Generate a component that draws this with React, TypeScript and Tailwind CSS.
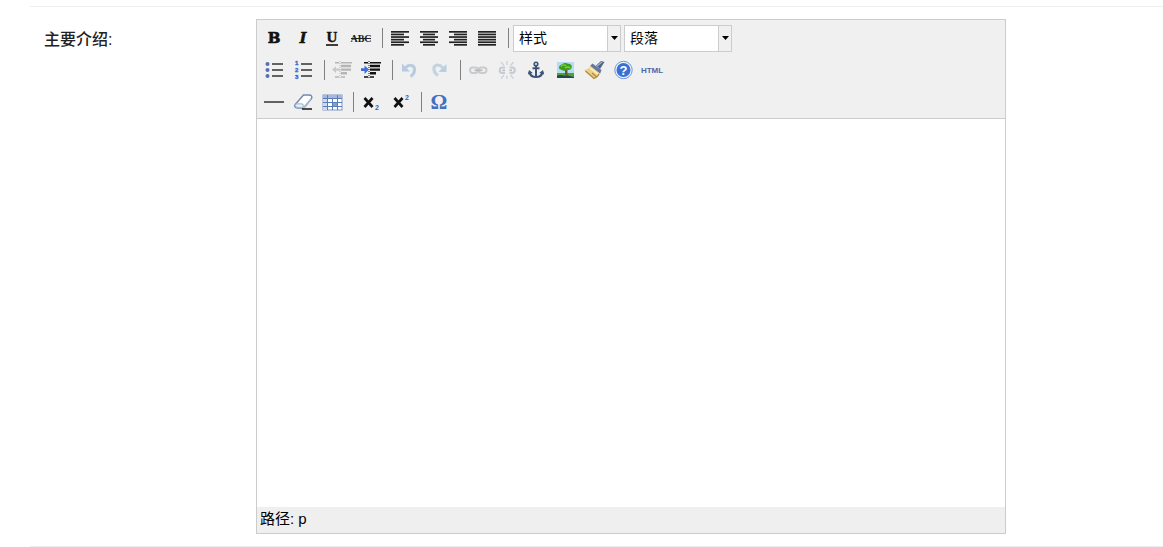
import React from 'react';

type ToolProps = {
  label: string;
  disabled?: boolean;
  children: React.ReactNode;
};

function Tool({ label, disabled, children }: ToolProps) {
  return (
    <button
      type="button"
      title={label}
      aria-label={label}
      disabled={disabled}
      className="mr-px flex h-7 w-7 shrink-0 items-center justify-center"
    >
      {children}
    </button>
  );
}

function Icon({ children }: { children: React.ReactNode }) {
  return (
    <svg width="20" height="20" viewBox="0 0 20 20" fill="none" className="block shrink-0 overflow-visible">
      {children}
    </svg>
  );
}

function Separator() {
  return <span className="ml-1.5 mr-[3px] h-5 w-px shrink-0 bg-[#808080]" />;
}

// each line is [start, end], stacked from the top
function Lines({ rows }: { rows: number[][] }) {
  return (
    <Icon>
      {rows.map(([from, to], i) => (
        <rect key={i} x={from} y={3 + i * 2.6} width={to - from} height="1.7" fill="#222" />
      ))}
    </Icon>
  );
}

function Dropdown({ label, value }: { label: string; value: string }) {
  return (
    <div className="relative mr-[3px] h-[27px] w-[108px] border border-[#ccc] bg-white">
      <select
        aria-label={label}
        defaultValue={value}
        className="block h-full w-full appearance-none bg-transparent pl-[5px] pr-4 text-sm text-black outline-none"
      >
        <option>{value}</option>
      </select>
      <span className="pointer-events-none absolute inset-y-0 right-0 flex w-[13px] items-center justify-center border-l border-[#ccc] bg-[#f0f0f0]">
        <svg width="7" height="4" viewBox="0 0 7 4">
          <path d="M0 0h7L3.5 4z" fill="#000" />
        </svg>
      </span>
    </div>
  );
}

function Indent({ color, arrow, outdent }: { color: string; arrow: string; outdent?: boolean }) {
  return (
    <Icon>
      <path d="M3 2.7h4M9 2.7h11M3 17h4M9 17h4" stroke={color} strokeWidth="1.4" />
      <path d="M9 6h10M9 9.6h10M9 13.2h6" stroke={color} strokeWidth="2.4" />
      <path d="M8 1v18" stroke={color} strokeDasharray="1 1" />
      {outdent ? (
        <path d="M0 9.6l4-3.4v2.2h4v2.4H4V13z" fill={arrow} />
      ) : (
        <path d="M8 9.6L3.5 5.5v2.7H0V11h3.500v2.900z" fill={arrow} />
      )}
    </Icon>
  );
}

function FormatRow() {
  return (
    <div className="flex h-8 items-center">
      <Tool label="粗体">
        <Icon>
          <text x="10" y="15" textAnchor="middle" fontFamily="DejaVu Serif" fontWeight="bold" fontSize="15" fill="#111" stroke="#111" strokeWidth="0.7">B</text>
        </Icon>
      </Tool>
      <Tool label="斜体">
        <Icon>
          <text x="10" y="15" textAnchor="middle" fontFamily="DejaVu Serif" fontWeight="bold" fontStyle="italic" fontSize="15" fill="#111" stroke="#111" strokeWidth="0.4">I</text>
        </Icon>
      </Tool>
      <Tool label="下划线">
        <Icon>
          <text x="10" y="14" textAnchor="middle" fontFamily="Liberation Serif" fontWeight="bold" fontSize="15" fill="#111" stroke="#111" strokeWidth="0.4">U</text>
          <path d="M4 17h12" stroke="#111" strokeWidth="1.6" />
        </Icon>
      </Tool>
      <Tool label="删除线">
        <Icon>
          <text x="10" y="14" textAnchor="middle" fontFamily="Liberation Serif" fontWeight="bold" fontSize="10" fill="#222">ABC</text>
          <path d="M0 10.5h20" stroke="#222" />
        </Icon>
      </Tool>
      <Separator />
      <Tool label="左对齐">
        <Lines rows={[[1, 19], [1, 14], [1, 19], [1, 14], [1, 19], [1, 14]]} />
      </Tool>
      <Tool label="居中对齐">
        <Lines rows={[[1, 19], [4, 16], [1, 19], [4, 16], [1, 19], [4, 16]]} />
      </Tool>
      <Tool label="右对齐">
        <Lines rows={[[1, 19], [6, 19], [1, 19], [6, 19], [1, 19], [6, 19]]} />
      </Tool>
      <Tool label="两端对齐">
        <Lines rows={[[1, 19], [1, 19], [1, 19], [1, 19], [1, 19], [1, 19]]} />
      </Tool>
      <Separator />
      <div className="ml-px flex">
        <Dropdown label="样式" value="样式" />
        <Dropdown label="格式" value="段落" />
      </div>
    </div>
  );
}

function InsertRow() {
  return (
    <div className="flex h-8 items-center">
      <Tool label="项目符号列表">
        <Icon>
          <path d="M8 4h11M8 10h11M8 16h11" stroke="#333" strokeWidth="1.7" />
          <g fill="#5470b0">
            <circle cx="3.5" cy="4" r="2" />
            <circle cx="3.5" cy="10" r="2" />
            <circle cx="3.5" cy="16" r="2" />
          </g>
        </Icon>
      </Tool>
      <Tool label="编号列表">
        <Icon>
          <path d="M8 4h11M8 10h11M8 16h11" stroke="#333" strokeWidth="1.7" />
          <g fontFamily="Liberation Sans" fontWeight="bold" fontSize="6" fill="#3d6cc8" stroke="#3d6cc8" strokeWidth="0.4">
            <text x="2" y="5">1</text>
            <text x="2" y="12">2</text>
            <text x="2" y="19">3</text>
          </g>
        </Icon>
      </Tool>
      <Separator />
      <Tool label="减少缩进" disabled>
        <Indent color="#b5b5b5" arrow="#c4cad2" outdent />
      </Tool>
      <Tool label="增加缩进">
        <Indent color="#111" arrow="#3f6fd6" />
      </Tool>
      <Separator />
      <Tool label="撤销" disabled>
        <Icon>
          <path d="M5 8.2c4.5-5 10-3 9.5 2-.2 3-1.8 5-4 6.3" stroke="#b9cbe0" strokeWidth="3" />
          <path d="M2 3.5v8h8z" fill="#b9cbe0" />
        </Icon>
      </Tool>
      <Tool label="重做" disabled>
        <Icon>
          <path d="M14 8C9.5 3 4 5 5 10c.4 2.6 2 4.3 4 5.5" stroke="#c3d3e2" strokeWidth="3" />
          <path d="M17.5 4v8h-8z" fill="#b9cfe0" />
        </Icon>
      </Tool>
      <Separator />
      <Tool label="插入链接" disabled>
        <Icon>
          <g stroke="#c9cccf" strokeWidth="2">
            <rect x="2" y="7.5" width="8" height="5.5" rx="2.7" />
            <rect x="10.5" y="7.5" width="8" height="5.5" rx="2.7" />
          </g>
          <path d="M6.5 10.3h8" stroke="#b8bcc0" strokeWidth="1.8" />
        </Icon>
      </Tool>
      <Tool label="取消链接" disabled>
        <Icon>
          <g stroke="#c6cbd0" strokeWidth="2">
            <path d="M8 7.5H5.5a2.8 2.8 0 000 5.6H8M12.5 7.5H15a2.800 2.800 0 010 5.600h-2.500" />
          </g>
          <path d="M5.5 10.3H8M12.5 10.3H15" stroke="#b8bcc0" strokeWidth="1.8" />
          <path d="M10 1v4M4 2l3 3.500M16.500 2L13.500 5.500M10 15.500V19M4 18.500L7 15M16.500 18.500L13.500 15" stroke="#c8d2dc" strokeWidth="1.3" />
        </Icon>
      </Tool>
      <Tool label="插入锚点">
        <Icon>
          <g stroke="#3d5478" strokeWidth="2">
            <circle cx="10" cy="4" r="1.8" strokeWidth="1.6" />
            <path d="M10 6v11M6.5 8.3h7" />
            <path d="M3.5 12c.5 3.5 3 5 6.5 5s6-1.5 6.5-5" />
          </g>
          <path d="M1.8 14.5L3 10l3.800 3zM18.200 14.500L17 10l-3.800 3z" fill="#3d5478" />
        </Icon>
      </Tool>
      <Tool label="插入图片">
        <Icon>
          <rect x="2" y="2" width="17" height="12" fill="#b4dcf4" />
          <rect x="2" y="13" width="17" height="5" fill="#4da436" />
          <path d="M2 15.5c3-1 6-.5 8 .3 3 0 6 .4 9 1.200V18H2z" fill="#1f4a52" />
          <path d="M10 9h2.500v5.500l2 1.500H8l2-1.500z" fill="#6b5a28" />
          <path d="M4 7.500c0-2 1.500-2.500 2.500-3 2-2 5-2 6.500-.8 3-.2 4.500 2.300 3.500 4.300-.8 2-3 2.300-4.500 1.500-2 1.800-4.500 1.500-5.500.3-1.500 0-2.500-1-2.500-2.300z" fill="#3f9d1e" />
          <path d="M6 6.500c1-1.500 3-2 5-1M10 8c1.500-1.500 4-1 5 0" stroke="#7fd042" strokeWidth="1.4" />
        </Icon>
      </Tool>
      <Tool label="清除格式">
        <Icon>
          <path d="M12 5.500L17 1l3.500 1L16 9z" fill="#4f648c" />
          <path d="M13 6l5-4" stroke="#9fb2d0" strokeWidth="1.4" />
          <path d="M8.500 3.500l9 6.500-1.500 4-10-8z" fill="#66779c" />
          <path d="M6.500 6l9.500 7.500c-1 3-3 4.500-6 5.500L0 10c3-.5 5-1.500 6.500-4z" fill="#ebd28c" />
          <path d="M1.500 11L10 18.500c2.500-1 4-2.500 5-4.500M8 13l4 3.500" stroke="#b08a3c" strokeWidth="1.3" />
          <path d="M6 8l8 6" stroke="#fff3c4" strokeWidth="1.4" />
        </Icon>
      </Tool>
      <Tool label="帮助">
        <Icon>
          <circle cx="10.5" cy="10" r="8.7" fill="#eef4ff" stroke="#6d94dd" />
          <circle cx="10.5" cy="10" r="7" fill="#3871d3" />
          <text x="10.5" y="14.5" textAnchor="middle" fontFamily="Liberation Sans" fontWeight="bold" fontSize="13" fill="#fff">?</text>
        </Icon>
      </Tool>
      <Tool label="编辑 HTML 源代码">
        <Icon>
          <text x="10" y="13" textAnchor="middle" fontFamily="Liberation Sans" fontWeight="bold" fontSize="8" fill="#4867ad">HTML</text>
        </Icon>
      </Tool>
    </div>
  );
}

function ExtraRow() {
  return (
    <div className="flex h-8 items-center">
      <Tool label="插入水平线">
        <Icon>
          <path d="M0 10h20" stroke="#333" strokeWidth="1.5" />
        </Icon>
      </Tool>
      <Tool label="清除">
        <Icon>
          <path d="M10.500 3H16c2.500 0 3.500 1.800 2.500 3.500L12 14.500c-.8 1-1.800 1.500-3 1.500H4.500c-2.500 0-3.500-1.800-2.300-3.500z" fill="#fff" stroke="#7189ae" strokeWidth="1.4" />
          <path d="M2.500 12c1-.8 2-.8 3-.8h3c2 0 2.800 1.500 2 3.300L18 6v2l-6.500 8h-7C2.500 16 1.500 14 2.500 12z" fill="#a9bbd6" />
          <path d="M3.500 12.500h5c1 0 1.500 1 .8 2.200H4.500c-1.500 0-1.800-1.200-1-2.200z" fill="#eef2f8" />
          <path d="M9 17h10" stroke="#222" strokeWidth="1.6" />
        </Icon>
      </Tool>
      <Tool label="插入表格">
        <Icon>
          <rect x="1" y="3" width="19" height="15" fill="#fff" stroke="#7f97c4" />
          <rect x="1" y="3" width="19" height="3" fill="#a5b8dc" />
          <rect x="1" y="6" width="4" height="12" fill="#cfdaee" />
          <path d="M5.5 3v15M10.500 6v12M15.500 3v15M1 6.500h19M1 10.500h19M1 14.500h19" stroke="#5b7cba" />
          <rect x="11" y="11" width="4" height="3" fill="#7da0dc" />
        </Icon>
      </Tool>
      <Separator />
      <Tool label="下标">
        <Icon>
          <path d="M3.500 6l8 9M11.500 6l-8 9" stroke="#111" strokeWidth="2.700" />
          <text x="14" y="18" fontFamily="Liberation Sans" fontWeight="bold" fontSize="7" fill="#4060bd">2</text>
        </Icon>
      </Tool>
      <Tool label="上标">
        <Icon>
          <path d="M4.500 6l8 9M12.500 6l-8 9" stroke="#111" strokeWidth="2.700" />
          <text x="15" y="8" fontFamily="Liberation Sans" fontWeight="bold" fontSize="7" fill="#4060bd">2</text>
        </Icon>
      </Tool>
      <Separator />
      <Tool label="插入特殊字符">
        <Icon>
          <text x="10" y="17" textAnchor="middle" fontFamily="Liberation Serif" fontWeight="bold" fontSize="21" fill="#456fc0">Ω</text>
        </Icon>
      </Tool>
    </div>
  );
}

function Editor() {
  return (
    <div className="flex w-full max-w-[750px] flex-col border border-[#ccc]">
      <div role="toolbar" aria-label="编辑器工具栏" className="border-b border-[#ccc] bg-[#f0f0f0] pl-[3px] pt-0.5">
        <FormatRow />
        <InsertRow />
        <ExtraRow />
      </div>
      <textarea
        id="intro"
        rows={16}
        className="block min-h-[388px] w-full resize-none bg-white p-2 text-sm outline-none"
      />
      <div className="bg-[#efefef] px-[3px] pb-0.5 text-[15px] leading-6 text-black">路径: p</div>
    </div>
  );
}

function App() {
  return (
    <div className="bg-white pt-1.5 font-['Liberation_Sans','Noto_Sans_CJK_SC',sans-serif]">
      <div className="ml-[30px] flex border-y border-[#eee] py-3 pl-3.5">
        <label htmlFor="intro" className="w-[212px] shrink-0 pt-2 text-base leading-[26px] font-medium text-[#222]">
          主要介绍:
        </label>
        <div className="min-w-0 flex-1">
          <Editor />
        </div>
      </div>
    </div>
  );
}

export default App;
